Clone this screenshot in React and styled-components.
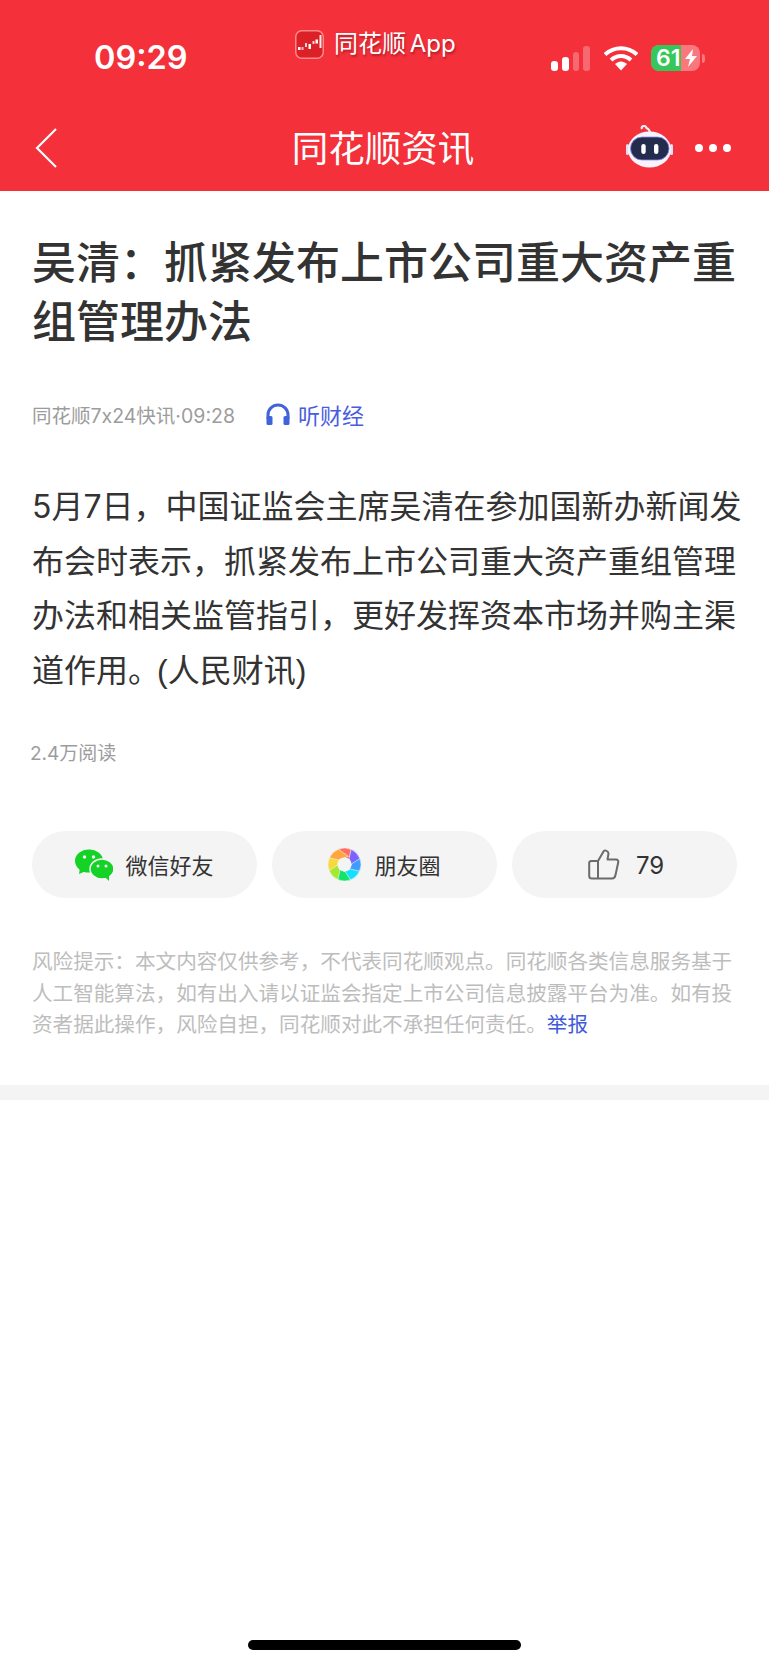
import React from "react";
import styled, { createGlobalStyle } from "styled-components";

const FONT = `Inter, "Noto Sans CJK SC", sans-serif`;

const GlobalStyle = createGlobalStyle`
  html, body {
    margin: 0;
    padding: 0;
    background: #fff;
    font-family: ${FONT};
  }
  * { box-sizing: border-box; }
`;

const Page = styled.div`
  width: 769px;
  height: 1665px;
  display: flex;
  flex-direction: column;
  overflow: hidden;
  background: #fff;
`;

const Header = styled.header`
  height: 191px;
  background: #f4303a;
  color: #fff;
  display: flex;
  flex-direction: column;
`;

const StatusBar = styled.div`
  height: 106px;
  padding: 24px 0 0 94px;
  display: flex;
  align-items: flex-start;
`;

const Time = styled.div`
  width: 201px;
  margin-top: 13px;
  font-size: 32.5px;
  line-height: 42px;
  font-weight: 600;
`;

const Source = styled.div`
  width: 256px;
  margin-top: 5px;
  display: flex;
  align-items: center;
  gap: 10px;
  font-size: 24px;
  line-height: 30px;
  font-weight: 400;
  word-spacing: -3px;
  text-shadow: 1px 2px 2px rgba(120, 20, 30, 0.55);
`;

const StatusIcons = styled.div`
  margin-top: 21px;
  display: flex;
  align-items: center;
`;

const Signal = styled.div`
  width: 39px;
  height: 25px;
  margin-right: 14px;
  display: flex;
  align-items: flex-end;
  gap: 4px;
`;

const SignalBar = styled.span`
  flex: 1;
  height: ${(p) => p.$h}px;
  border-radius: 3px;
  background: ${(p) => (p.$on ? "#fff" : "rgba(255,255,255,0.28)")};
`;

const Battery = styled.div`
  width: 49px;
  height: 26px;
  margin-left: 13px;
  border-radius: 8px;
  position: relative;
  display: flex;
  background: rgba(255, 255, 255, 0.35);
`;

const BatteryFill = styled.div`
  width: 30px;
  border-radius: 8px 0 0 8px;
  background: #35c759;
`;

const BatteryText = styled.span`
  position: absolute;
  left: 5px;
  top: 0;
  font-size: 23px;
  line-height: 26px;
  font-weight: 600;
`;

const BatteryBolt = styled.svg`
  position: absolute;
  left: 33px;
  top: 4px;
`;

const BatteryCap = styled.span`
  width: 3px;
  height: 9px;
  margin-left: 2px;
  border-radius: 0 3px 3px 0;
  background: rgba(255, 255, 255, 0.35);
`;

const NavBar = styled.div`
  flex: 1;
  padding: 0 38px 0 35px;
  display: flex;
  align-items: center;
`;

const BackSlot = styled.div`
  width: 248px;
  margin-top: -2px;
  display: flex;
`;

const NavTitle = styled.div`
  width: 200px;
  font-size: 36.5px;
  line-height: 44px;
  text-align: center;
  white-space: nowrap;
  font-weight: 400;
`;

const NavRight = styled.div`
  margin-left: auto;
  display: flex;
  align-items: center;
  gap: 22px;
`;

const RobotSlot = styled.div`
  display: flex;
  margin-top: -4px;
`;

const Dots = styled.div`
  margin-top: -1px;
  display: flex;
  gap: 6px;
`;

const Dot = styled.span`
  width: 8px;
  height: 8px;
  border-radius: 50%;
  background: #fff;
`;

const Article = styled.main`
  padding: 0 31px 0 32px;
`;

const Title = styled.h1`
  margin: 43px 0 0;
  font-size: 44px;
  line-height: 59px;
  font-weight: 500;
  color: #333;
  width: 710px;
`;

const Meta = styled.div`
  margin-top: 45px;
  display: flex;
  align-items: center;
  height: 34px;
`;

const MetaText = styled.span`
  font-size: 19.5px;
  color: #9c9c9c;
`;

const Listen = styled.span`
  margin-left: 31px;
  display: flex;
  align-items: center;
  gap: 8px;
  font-size: 22px;
  color: #4a5de0;
`;

const Body = styled.p`
  margin: 49px 0 0;
  font-size: 32px;
  line-height: 54.5px;
  color: #333;
  width: 712px;
`;

const Credit = styled.span`
  margin-left: -3px;
  font-family: "Liberation Sans", "Noto Sans CJK SC", sans-serif;
`;

const Reads = styled.div`
  margin-top: 41px;
  margin-left: -2px;
  font-size: 19px;
  line-height: 30px;
  color: #9c9c9c;
`;

const Actions = styled.div`
  margin-top: 62px;
  display: grid;
  grid-template-columns: repeat(3, 225px);
  gap: 15px;
  width: 706px;
`;

const Action = styled.div`
  height: 67px;
  border-radius: 34px;
  background: #f4f4f4;
  padding-left: ${(p) => p.$shift || 0}px;
  display: flex;
  align-items: center;
  justify-content: center;
  gap: ${(p) => p.$gap}px;
  font-size: ${(p) => p.$size || 22}px;
  color: #333;
`;

const ActionLabel = styled.span`
  margin-top: -2px;
`;

const ActionCount = styled.span`
  margin-top: 1px;
`;

const Risk = styled.p`
  margin: 48px 0 0;
  width: 710px;
  font-size: 20.6px;
  line-height: 31.5px;
  color: #bdbdbd;
`;

const Report = styled.span`
  color: #3f5bd9;
`;

const Divider = styled.div`
  height: 15px;
  margin-top: 44px;
  background: #f4f4f4;
`;

const HomeIndicator = styled.div`
  width: 273px;
  height: 10px;
  margin: auto auto 15px;
  border-radius: 5px;
  background: #000;
`;

const AppLogo = () => (
  <svg width="29" height="29" viewBox="0 0 29 29">
    <rect x="0.75" y="0.75" width="27.5" height="27.5" rx="6" fill="#dc2027" stroke="#f88" strokeWidth="1.5" />
    <g fill="#fff">
      <rect x="3" y="17" width="2.5" height="3" />
      <rect x="6.5" y="17" width="2" height="3" opacity=".7" />
      <rect x="10" y="13" width="2" height="4" opacity=".8" />
      <rect x="13.5" y="14" width="2.5" height="5" />
      <rect x="17.5" y="11" width="2" height="3" opacity=".8" />
      <rect x="20.5" y="9.5" width="2.5" height="4" />
      <rect x="24.5" y="5" width="2" height="13" opacity=".9" />
    </g>
  </svg>
);

const Wifi = () => (
  <svg width="34" height="25" viewBox="0 0 34 25">
    <path d="M1 8.5 C10 0 24 0 33 8.5" fill="none" stroke="#fff" strokeWidth="4" />
    <path d="M7 14 C13 8.5 21 8.5 27 14" fill="none" stroke="#fff" strokeWidth="4" />
    <path d="M11 18 C15 14.5 19 14.5 23 18 L17 24.5 Z" fill="#fff" />
  </svg>
);

const BackIcon = () => (
  <svg width="22" height="40" viewBox="0 0 22 40">
    <path d="M21 1 L2 20 L21 39" fill="none" stroke="#fff" strokeWidth="2.2" />
  </svg>
);

const Robot = () => (
  <svg width="47" height="43" viewBox="0 0 47 43">
    <path d="M16 4 C14.5 0.5 19.5 0 20.5 3 C22 3.5 23.5 5 24 7.5" fill="none" stroke="#f3eef8" strokeWidth="2.2" />
    <rect x="0" y="19" width="3" height="11" rx="1.5" fill="#e4def4" />
    <rect x="44" y="19" width="3" height="11" rx="1.5" fill="#e4def4" />
    <ellipse cx="23.5" cy="24.5" rx="21.5" ry="18" fill="#f5f3fb" />
    <rect x="4.5" y="12" width="38.5" height="23" rx="11.5" fill="#232c4c" stroke="#9a86ee" strokeWidth="0.8" />
    <rect x="15.3" y="19" width="4.4" height="10" rx="2.2" fill="#fff" />
    <rect x="28" y="19" width="4.4" height="10" rx="2.2" fill="#fff" />
  </svg>
);

const Headphones = () => (
  <svg width="24" height="23" viewBox="0 0 24 23">
    <path d="M2 16 V12 A10 10 0 0 1 22 12 V16" fill="none" stroke="#4262dc" strokeWidth="3" />
    <rect x="0.5" y="13" width="6" height="9" rx="1.5" fill="#4262dc" />
    <rect x="17.5" y="13" width="6" height="9" rx="1.5" fill="#4262dc" />
  </svg>
);

const WeChat = () => (
  <svg width="38" height="32" viewBox="0 0 38 32">
    <ellipse cx="14" cy="12" rx="14" ry="11.5" fill="#14d226" />
    <path d="M5 19 L4 25 L11 22 Z" fill="#14d226" />
    <ellipse cx="27" cy="20" rx="12" ry="10" stroke="#f4f4f4" strokeWidth="1.5" fill="#14d226" />
    <path d="M30 28 L34 32 L34 25 Z" fill="#14d226" />
    <circle cx="9.5" cy="8" r="1.7" fill="#f4f4f4" />
    <circle cx="18.5" cy="8" r="1.7" fill="#f4f4f4" />
    <circle cx="23" cy="17" r="1.5" fill="#f4f4f4" />
    <circle cx="31" cy="17" r="1.5" fill="#f4f4f4" />
  </svg>
);

const APERTURE = ["#ff6f61", "#7a63ff", "#3f9dff", "#12e0ff", "#12e46a", "#a6e82e", "#f7d93a", "#ffa63f"];

const Aperture = () => (
  <svg width="33" height="33" viewBox="-16.5 -16.5 33 33">
    {APERTURE.map((c, i) => (
      <path
        key={c}
        d="M-6 -15.4 A16.5 16.5 0 0 1 6.5 -15.2 L8.5 -3 L-1 -7.5 Z"
        fill={c}
        stroke="#f4f4f4"
        strokeWidth="0.6"
        transform={`rotate(${i * 45})`}
      />
    ))}
    <circle r="7" fill="#f4f4f4" />
  </svg>
);

const ThumbUp = () => (
  <svg width="32" height="31" viewBox="0 0 32 31">
    <path
      d="M10 12 L15.5 2.5 C16 1 20 1 20.5 4.5 L19.5 10.5 L28 10.5 C30 10.5 30.5 12 30.2 13.5 L27.5 26 C27 28.5 25.5 29.5 24 29.5 L4 29.5 C2 29.5 1.2 28.5 1.2 27 L1.2 14 C1.2 12.5 2 12 3.5 12 L10 12 L10 29.5"
      fill="none"
      stroke="#6b6b6b"
      strokeWidth="2"
      strokeLinejoin="round"
    />
  </svg>
);

export default function App() {
  return (
    <Page>
      <GlobalStyle />
      <Header>
        <StatusBar>
          <Time>09:29</Time>
          <Source>
            <AppLogo />
            同花顺 App
          </Source>
          <StatusIcons>
            <Signal>
              <SignalBar $h={10} $on />
              <SignalBar $h={14} $on />
              <SignalBar $h={19} />
              <SignalBar $h={25} />
            </Signal>
            <Wifi />
            <Battery>
              <BatteryFill />
              <BatteryText>61</BatteryText>
              <BatteryBolt width="14" height="18" viewBox="0 0 14 18">
                <path d="M9 0 L1 10 L6 10 L4 18 L13 7 L8 7 Z" fill="#fff" />
              </BatteryBolt>
            </Battery>
            <BatteryCap />
          </StatusIcons>
        </StatusBar>
        <NavBar>
          <BackSlot>
            <BackIcon />
          </BackSlot>
          <NavTitle>同花顺资讯</NavTitle>
          <NavRight>
            <RobotSlot>
              <Robot />
            </RobotSlot>
            <Dots>
              <Dot />
              <Dot />
              <Dot />
            </Dots>
          </NavRight>
        </NavBar>
      </Header>
      <Article>
        <Title>吴清&#xFF1A;抓紧发布上市公司重大资产重组管理办法</Title>
        <Meta>
          <MetaText>同花顺7x24快讯·09:28</MetaText>
          <Listen>
            <Headphones />
            听财经
          </Listen>
        </Meta>
        <Body>
          5月7日&#xFF0C;中国证监会主席吴清在参加国新办新闻发布会时表示&#xFF0C;抓紧发布上市公司重大资产重组管理办法和相关监管指引&#xFF0C;更好发挥资本市场并购主渠道作用。
          <Credit>(人民财讯)</Credit>
        </Body>
        <Reads>2.4万阅读</Reads>
        <Actions>
          <Action $gap={12}>
            <WeChat />
            <ActionLabel>微信好友</ActionLabel>
          </Action>
          <Action $gap={13}>
            <Aperture />
            <ActionLabel>朋友圈</ActionLabel>
          </Action>
          <Action $gap={16} $size={24} $shift={3}>
            <ThumbUp />
            <ActionCount>79</ActionCount>
          </Action>
        </Actions>
        <Risk>
          风险提示&#xFF1A;本文内容仅供参考&#xFF0C;不代表同花顺观点。同花顺各类信息服务基于人工智能算法&#xFF0C;如有出入请以证监会指定上市公司信息披露平台为准。如有投资者据此操作&#xFF0C;风险自担&#xFF0C;同花顺对此不承担任何责任。
          <Report>举报</Report>
        </Risk>
      </Article>
      <Divider />
      <HomeIndicator />
    </Page>
  );
}
